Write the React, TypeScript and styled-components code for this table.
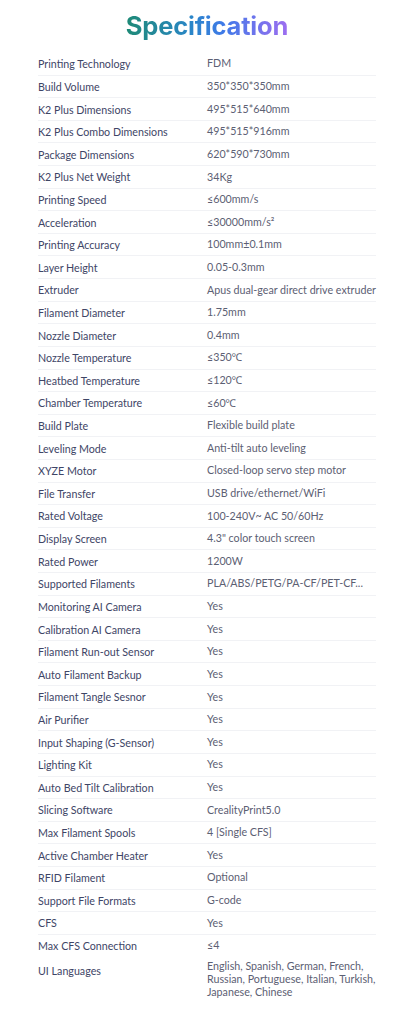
import React from "react";
import styled, { createGlobalStyle } from "styled-components";

const Global = createGlobalStyle`
  html, body { margin: 0; padding: 0; background: #ffffff; }
  body { font-family: Lato, "Noto Sans", sans-serif; -webkit-font-smoothing: antialiased; }
`;

const Page = styled.div`
  width: 403px;
  height: 1024px;
  box-sizing: border-box;
  padding: 0 27px 0 38px;
  background: #fff;
`;

const Title = styled.h1`
  margin: 0;
  height: 53px;
  display: flex;
  align-items: center;
  justify-content: center;
  font-family: Inter, "Noto Sans", sans-serif;
  font-weight: 700;
  font-size: 25.5px;
  letter-spacing: -0.2px;
  padding-bottom: 2px;
  box-sizing: border-box;
  span {
    background: linear-gradient(90deg, #1e8a76 0%, #2a86c8 40%, #3f7ae8 60%, #9d6ef0 100%);
    -webkit-background-clip: text;
    background-clip: text;
    color: transparent;
  }
`;

const Table = styled.div`
  display: flex;
  flex-direction: column;
`;

const Row = styled.div<{ $last?: boolean }>`
  display: grid;
  grid-template-columns: 169px 1fr;
  min-height: 22.62px;
  align-items: center;
  box-sizing: border-box;
  border-bottom: 1px solid ${(p) => (p.$last ? "transparent" : "#f1f2f5")};
`;

const Label = styled.div<{ $top?: boolean }>`
  font-size: 10.7px;
  color: #3e4566;
  line-height: 13px;
  white-space: nowrap;
  ${(p) => (p.$top ? "padding-top: 4px;" : "")}
`;

const Value = styled.div<{ $multi?: boolean }>`
  font-size: 10.7px;
  color: #5c6073;
  line-height: 12.7px;
  white-space: nowrap;
  ${(p) => (p.$multi ? "align-self: start;" : "")}
`;

const MultiRow = styled(Row)`
  align-items: start;
  padding-top: 3px;
`;

const specs: [string, string][] = [
  ["Printing Technology", "FDM"],
  ["Build Volume", "350*350*350mm"],
  ["K2 Plus Dimensions", "495*515*640mm"],
  ["K2 Plus Combo Dimensions", "495*515*916mm"],
  ["Package Dimensions", "620*590*730mm"],
  ["K2 Plus Net Weight", "34Kg"],
  ["Printing Speed", "≤600mm/s"],
  ["Acceleration", "≤30000mm/s²"],
  ["Printing Accuracy", "100mm±0.1mm"],
  ["Layer Height", "0.05-0.3mm"],
  ["Extruder", "Apus dual-gear direct drive extruder"],
  ["Filament Diameter", "1.75mm"],
  ["Nozzle Diameter", "0.4mm"],
  ["Nozzle Temperature", "≤350℃"],
  ["Heatbed Temperature", "≤120℃"],
  ["Chamber Temperature", "≤60℃"],
  ["Build Plate", "Flexible build plate"],
  ["Leveling Mode", "Anti-tilt auto leveling"],
  ["XYZE Motor", "Closed-loop servo step motor"],
  ["File Transfer", "USB drive/ethernet/WiFi"],
  ["Rated Voltage", "100-240V~ AC 50/60Hz"],
  ["Display Screen", "4.3\" color touch screen"],
  ["Rated Power", "1200W"],
  ["Supported Filaments", "PLA/ABS/PETG/PA-CF/PET-CF..."],
  ["Monitoring AI Camera", "Yes"],
  ["Calibration AI Camera", "Yes"],
  ["Filament Run-out Sensor", "Yes"],
  ["Auto Filament Backup", "Yes"],
  ["Filament Tangle Sesnor", "Yes"],
  ["Air Purifier", "Yes"],
  ["Input Shaping (G-Sensor)", "Yes"],
  ["Lighting Kit", "Yes"],
  ["Auto Bed Tilt Calibration", "Yes"],
  ["Slicing Software", "CrealityPrint5.0"],
  ["Max Filament Spools", "4 [Single CFS]"],
  ["Active Chamber Heater", "Yes"],
  ["RFID Filament", "Optional"],
  ["Support File Formats", "G-code"],
  ["CFS", "Yes"],
  ["Max CFS Connection", "≤4"],
];

export default function App() {
  return (
    <Page>
      <Global />
      <Title>
        <span>Specification</span>
      </Title>
      <Table>
        {specs.map(([k, v], i) => (
          <Row key={k} $last={i === specs.length - 1}>
            <Label>{k}</Label>
            <Value>{v}</Value>
          </Row>
        ))}
        <MultiRow $last>
          <Label $top>UI Languages</Label>
          <Value $multi>
            English, Spanish, German, French,
            <br />
            Russian, Portuguese, Italian, Turkish,
            <br />
            Japanese, Chinese
          </Value>
        </MultiRow>
      </Table>
    </Page>
  );
}
